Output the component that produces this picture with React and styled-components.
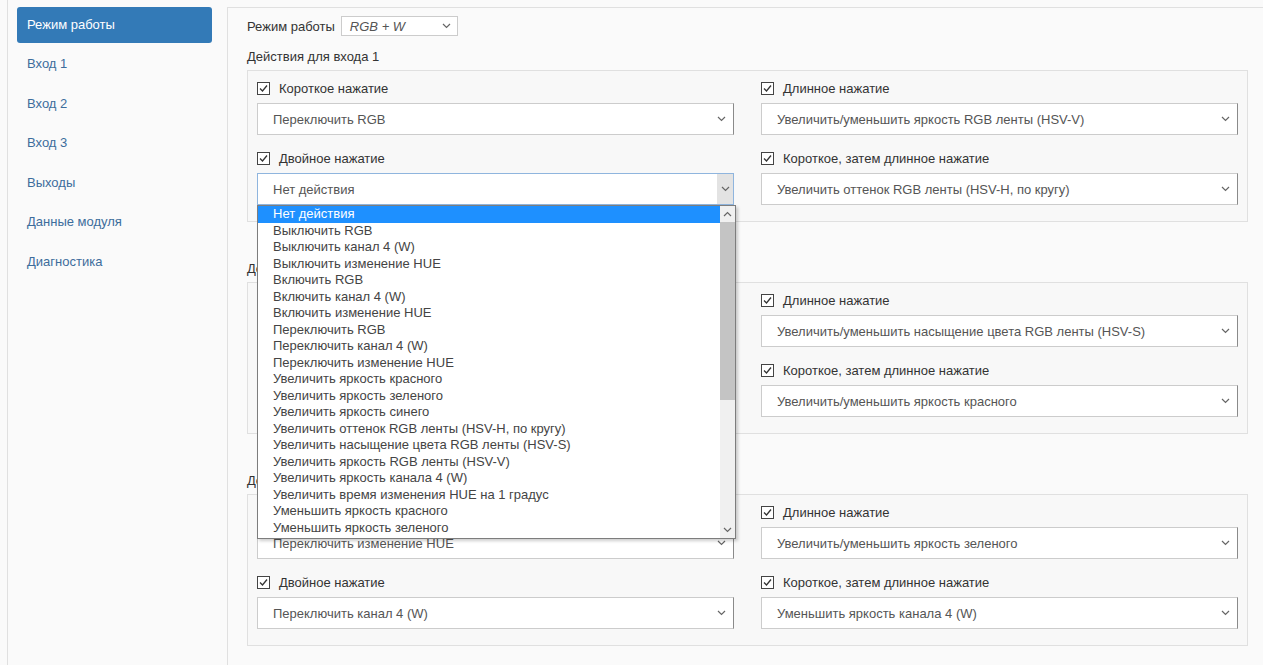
import React from 'react';
import styled, { createGlobalStyle } from 'styled-components';

const OPTIONS = [
  'Нет действия',
  'Выключить RGB',
  'Выключить канал 4 (W)',
  'Выключить изменение HUE',
  'Включить RGB',
  'Включить канал 4 (W)',
  'Включить изменение HUE',
  'Переключить RGB',
  'Переключить канал 4 (W)',
  'Переключить изменение HUE',
  'Увеличить яркость красного',
  'Увеличить яркость зеленого',
  'Увеличить яркость синего',
  'Увеличить оттенок RGB ленты (HSV-H, по кругу)',
  'Увеличить насыщение цвета RGB ленты (HSV-S)',
  'Увеличить яркость RGB ленты (HSV-V)',
  'Увеличить яркость канала 4 (W)',
  'Увеличить время изменения HUE на 1 градус',
  'Уменьшить яркость красного',
  'Уменьшить яркость зеленого',
  'Уменьшить яркость синего',
];

const MENU = ['Режим работы', 'Вход 1', 'Вход 2', 'Вход 3', 'Выходы', 'Данные модуля', 'Диагностика'];

const SECTIONS = [
  {
    title: 'Действия для входа 1',
    fields: [
      { label: 'Короткое нажатие', value: 'Переключить RGB' },
      { label: 'Длинное нажатие', value: 'Увеличить/уменьшить яркость RGB ленты (HSV-V)' },
      { label: 'Двойное нажатие', value: 'Нет действия', open: true },
      { label: 'Короткое, затем длинное нажатие', value: 'Увеличить оттенок RGB ленты (HSV-H, по кругу)' },
    ],
  },
  {
    title: 'Действия для входа 2',
    fields: [
      { label: 'Короткое нажатие', value: 'Переключить канал 4 (W)' },
      { label: 'Длинное нажатие', value: 'Увеличить/уменьшить насыщение цвета RGB ленты (HSV-S)' },
      { label: 'Двойное нажатие', value: 'Нет действия' },
      { label: 'Короткое, затем длинное нажатие', value: 'Увеличить/уменьшить яркость красного' },
    ],
  },
  {
    title: 'Действия для входа 3',
    fields: [
      { label: 'Короткое нажатие', value: 'Переключить изменение HUE' },
      { label: 'Длинное нажатие', value: 'Увеличить/уменьшить яркость зеленого' },
      { label: 'Двойное нажатие', value: 'Переключить канал 4 (W)' },
      { label: 'Короткое, затем длинное нажатие', value: 'Уменьшить яркость канала 4 (W)' },
    ],
  },
];

const Chevron = ({ up }) => (
  <svg width="9" height="6" viewBox="0 0 9 6">
    <polyline
      points={up ? '1,5 4.5,1.5 8,5' : '1,1 4.5,4.5 8,1'}
      fill="none"
      stroke="#666"
      strokeWidth="1.2"
    />
  </svg>
);

const Check = () => (
  <CheckBox>
    <svg width="11" height="11" viewBox="0 0 11 11">
      <polyline points="2,5.5 4.5,8 9,2.5" fill="none" stroke="#333" strokeWidth="1.3" />
    </svg>
  </CheckBox>
);

const Dropdown = () => (
  <List>
    <Options>
      {OPTIONS.map((o, i) => (
        <Option key={o} $active={i === 0}>{o}</Option>
      ))}
    </Options>
    <Scrollbar>
      <ScrollArrow><Chevron up /></ScrollArrow>
      <Thumb />
      <Track />
      <ScrollArrow><Chevron /></ScrollArrow>
    </Scrollbar>
  </List>
);

const Field = ({ label, value, open }) => (
  <FieldWrap>
    <CheckRow>
      <Check />
      <span>{label}</span>
    </CheckRow>
    <SelectWrap>
      <Select $open={open}>
        <SelectText>{value}</SelectText>
        <Arrow $open={open}><Chevron /></Arrow>
      </Select>
      {open && <Dropdown />}
    </SelectWrap>
  </FieldWrap>
);

const App = () => (
  <Page>
    <GlobalStyle />
    <Sidebar>
      {MENU.map((m, i) => (
        <NavItem key={m} $active={i === 0}>{m}</NavItem>
      ))}
    </Sidebar>
    <Main>
      <ModeRow>
        <span>Режим работы</span>
        <ModeSelect>
          <span>RGB + W</span>
          <Chevron />
        </ModeSelect>
      </ModeRow>
      {SECTIONS.map((s, si) => (
        <Section key={s.title} $open={si === 0}>
          <SectionTitle>{s.title}</SectionTitle>
          <GroupBox>
            {s.fields.map((f) => (
              <Field key={f.label} {...f} />
            ))}
          </GroupBox>
        </Section>
      ))}
    </Main>
  </Page>
);

const GlobalStyle = createGlobalStyle`
  html, body {
    margin: 0;
    padding: 0;
    background: #fafafa;
  }
  body {
    font-family: "Liberation Sans", Arial, sans-serif;
    font-size: 13px;
    color: #333;
  }
`;

const Page = styled.div`
  display: flex;
  height: 665px;
  overflow: hidden;
`;

const Sidebar = styled.div`
  margin-left: 7px;
  width: 210px;
  padding: 7px 0 0 9px;
  border-left: 1px solid #e0e0e0;
  display: flex;
  flex-direction: column;
  gap: 3.5px;
`;

const NavItem = styled.div`
  width: 195px;
  height: 36px;
  box-sizing: border-box;
  padding: 0 10px 2px;
  display: flex;
  align-items: center;
  border-radius: 3px;
  background: ${(p) => (p.$active ? '#337ab7' : 'transparent')};
  color: ${(p) => (p.$active ? '#fff' : '#3d6d9c')};
`;

const Main = styled.div`
  flex: 1;
  min-width: 0;
  margin-top: 7px;
  padding: 8px 15px 0 19px;
  border-left: 1px solid #e0e0e0;
  border-top: 1px solid #e0e0e0;
  background: #fafafa;
`;

const ModeRow = styled.div`
  display: flex;
  align-items: center;
  gap: 6px;
  height: 20px;
`;

const ModeSelect = styled.div`
  width: 117px;
  height: 20px;
  box-sizing: border-box;
  border: 1px solid #ccc;
  background: #fff;
  display: flex;
  align-items: center;
  justify-content: space-between;
  padding: 0 6px 0 8px;
  font-style: italic;
  color: #555;
`;

const Section = styled.div`
  margin-top: ${(p) => (p.$open ? '12px' : '38px')};
  position: relative;
  z-index: ${(p) => (p.$open ? 5 : 1)};
`;

const SectionTitle = styled.div`
  line-height: 18px;
  margin-bottom: 4px;
`;

const GroupBox = styled.div`
  border: 1px solid #e0e0e0;
  background: #f8f8f8;
  padding: 7px 9px 16px;
  display: grid;
  grid-template-columns: 1fr 1fr;
  column-gap: 27px;
  row-gap: 13px;
`;

const FieldWrap = styled.div`
  display: flex;
  flex-direction: column;
  min-width: 0;
`;

const CheckRow = styled.div`
  height: 20px;
  display: flex;
  align-items: center;
  gap: 9px;
  margin-bottom: 5px;
`;

const CheckBox = styled.span`
  width: 13px;
  height: 13px;
  box-sizing: border-box;
  border: 1px solid #444;
  background: #fff;
  display: flex;
  align-items: center;
  justify-content: center;
`;

const SelectWrap = styled.div`
  position: relative;
`;

const Select = styled.div`
  height: 32px;
  box-sizing: border-box;
  border: 1px solid ${(p) => (p.$open ? '#8fb5de' : '#ccc')};
  border-right-color: ${(p) => (p.$open ? '#8fb5de' : '#8a8a8a')};
  background: #fff;
  display: flex;
  align-items: stretch;
  color: #555;
`;

const SelectText = styled.span`
  flex: 1;
  display: flex;
  align-items: center;
  padding-left: 15px;
  white-space: nowrap;
  overflow: hidden;
`;

const Arrow = styled.span`
  width: 16px;
  margin-right: ${(p) => (p.$open ? '0' : '4px')};
  display: flex;
  align-items: center;
  justify-content: center;
  background: ${(p) => (p.$open ? '#e3e3e3' : 'transparent')};
`;

const List = styled.div`
  position: absolute;
  top: 100%;
  left: 0;
  width: calc(100% + 2px);
  height: 334px;
  box-sizing: border-box;
  border: 1px solid #7d7d7d;
  background: #fff;
  box-shadow: 2px 2px 3px rgba(0, 0, 0, 0.2);
  display: flex;
  z-index: 10;
`;

const Options = styled.div`
  flex: 1;
  overflow: hidden;
`;

const Option = styled.div`
  height: 16.5px;
  line-height: 16.5px;
  padding-left: 15px;
  white-space: nowrap;
  background: ${(p) => (p.$active ? '#1e90ff' : 'transparent')};
  color: ${(p) => (p.$active ? '#fff' : '#444')};
`;

const Scrollbar = styled.div`
  width: 15px;
  background: #f0f0f0;
  display: flex;
  flex-direction: column;
`;

const ScrollArrow = styled.div`
  height: 16px;
  display: flex;
  align-items: center;
  justify-content: center;
`;

const Thumb = styled.div`
  height: 178px;
  background: #c4c4c4;
`;

const Track = styled.div`
  flex: 1;
`;

export default App;
